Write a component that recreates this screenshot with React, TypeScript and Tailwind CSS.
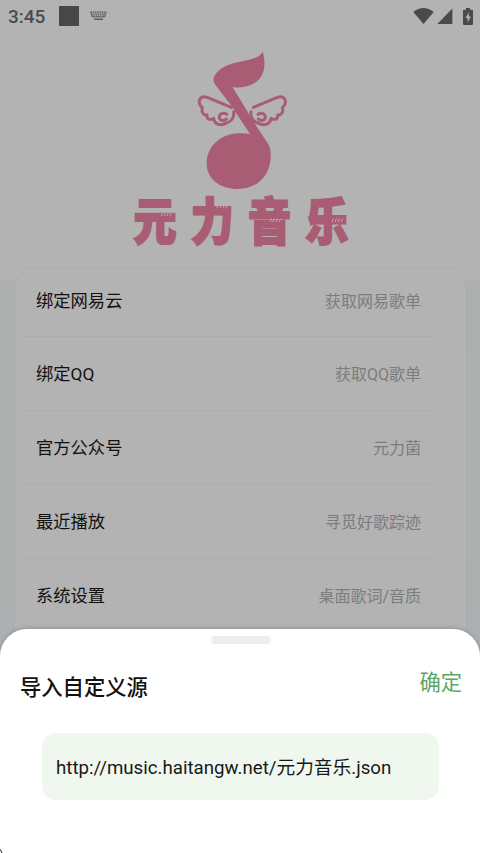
const rows = [
  { label: "绑定网易云", value: "获取网易歌单" },
  { label: "绑定QQ", value: "获取QQ歌单" },
  { label: "官方公众号", value: "元力菌" },
  { label: "最近播放", value: "寻觅好歌踪迹" },
  { label: "系统设置", value: "桌面歌词/音质" },
];

function KeyboardIcon() {
  return (
    <svg className="ml-[11px] h-[10px] w-[17px]" viewBox="0 0 17 10" fill="none" stroke="#555">
      <path d="M0.5 1.2H16.5M1 3.2H16M1.5 5.2H15.5" strokeWidth="1.3" strokeDasharray="1.5 0.7" />
      <path d="M0.5 1L2.5 6H14.5L16.5 1" strokeWidth="0.7" />
      <path d="M4 8.3H13" strokeWidth="1.3" />
    </svg>
  );
}

function StatusBar() {
  return (
    <div className="flex h-[34px] shrink-0 items-center pr-[7px] pb-[2px] pl-2 text-[#4a4a4a]">
      <span className="w-[51px] text-[19px] leading-none font-medium">3:45</span>
      <span className="size-5 bg-[#474747]" />
      <KeyboardIcon />
      <svg className="ml-auto h-4 w-[21px]" viewBox="0 0 21 16" fill="currentColor">
        <path d="M0.3 4Q10.5-4 20.7 4L10.5 16Z" />
      </svg>
      <svg className="ml-[3px] h-4 w-4" viewBox="0 0 16 16" fill="currentColor">
        <path d="M0.3 16L15.4 0.5V16Z" />
      </svg>
      <svg className="ml-[10px] h-[17px] w-[10px]" viewBox="0 0 10 17">
        <path d="M3 0H7V1.7H9Q10 1.7 10 2.7V16Q10 17 9 17H1Q0 17 0 16V2.7Q0 1.7 1 1.7H3Z" fill="currentColor" />
        <path d="M6 4.3L2.4 10H4.6V14.5L7.9 8.5H5.8Z" fill="#b3b3b3" />
      </svg>
    </div>
  );
}

function Wing() {
  return (
    <g fill="none" stroke="#a85d74" strokeWidth="9" strokeLinecap="round" strokeLinejoin="round">
      <path d="M124 187L52 157C36 151 26 161 28 174C29 181 34 185 37 188C33 200 39 211 51 210C49 223 59 226 71 220C73 237 88 242 103 237C121 232 134 219 131 200" />
      <path d="M110 208C100 201 88 206 88 216C88 227 103 230 109 222" />
    </g>
  );
}

function Logo() {
  return (
    <svg className="mt-[11px] ml-[190px] h-[145px] w-[105px] shrink-0" viewBox="0 0 315 435">
      <Wing />
      <g transform="translate(314 0) scale(-1 1)">
        <Wing />
      </g>
      <path
        d="M218 20C228 54 225 84 206 104C188 122 158 129 128 127L192 232L232 293C240 304 243 317 242 338C240 393 200 432 143 432C91 432 51 403 50 357C49 306 91 266 146 265C157 264 169 265 180 267L123 181L76 119C69 111 68 99 77 87C91 66 119 56 150 50C183 43 208 39 218 20Z"
        fill="#a85d74"
      />
    </svg>
  );
}

function Wordmark() {
  return (
    <div className="relative mt-[3px] ml-[132px] h-[56px] w-[220px] shrink-0">
      <div className="grid h-full origin-top scale-y-[1.17] grid-cols-[repeat(4,57.3px)] text-[43px] leading-[50px] font-black text-[#a85d74] [-webkit-text-stroke:1.8px_#a85d74]">
        {["元", "力", "音", "乐"].map((c) => (
          <span key={c} className="block w-[46px] text-center">{c}</span>
        ))}
      </div>
      <svg
        className="absolute inset-0 h-full w-full"
        viewBox="0 0 220 56"
        stroke="#c9a5ae"
        strokeWidth="1"
      >
        <path d="M29 23l1.5-3.5M32 23l1.5-3.5M35 23l1.5-3.5M38 23l1.5-3.5" />
        <path d="M85 15l1.5-3.5M88 15l1.5-3.5M91 15l1.5-3.5M94 15l1.5-3.5" />
        <path d="M138 29l1.5-3.5M141 29l1.5-3.5M144 29l1.5-3.5M147 29l1.5-3.5" />
        <path d="M200 29l1.5-3.5M203 29l1.5-3.5M206 29l1.5-3.5M209 29l1.5-3.5" />
      </svg>
    </div>
  );
}

export default function App() {
  return (
    <div
      className="relative flex h-[853px] w-[480px] flex-col overflow-hidden bg-[#b3b3b3]"
      style={{ fontFamily: 'Roboto, "Noto Sans CJK SC", sans-serif' }}
    >
      <header className="flex h-[280px] shrink-0 flex-col">
        <StatusBar />
        <Logo />
        <Wordmark />
      </header>
      <main className="flex-1 bg-gradient-to-b from-[#acb1af] to-[#adb0b2] to-60% px-[14px]">
        <section className="relative -mt-[13px] mr-[-1px] h-[600px] rounded-[21px] border border-[#acacac] bg-[#b3b3b3] pr-[34px] pl-[10px]">
          {rows.map((row, i) => (
            <div
              key={row.label}
              className={`flex items-center justify-between border-b border-[#acacac] pr-[11px] pl-[11px] ${i === 0 ? "h-[69px] pb-px" : "h-[74px] pt-[3px]"}`}
            >
              <span className="text-[17.3px] text-[#111]">{row.label}</span>
              <span className="text-[16px] text-[#7c7c7c]">{row.value}</span>
            </div>
          ))}
        </section>
      </main>

      <div className="absolute inset-x-0 bottom-0 flex h-[224px] flex-col rounded-t-[27px] bg-white shadow-[0_-1px_4px_rgba(0,0,0,0.18)]">
        <span className="mt-[7px] ml-[211px] h-2 w-[60px] shrink-0 rounded-full bg-[#eee]" />
        <div className="flex h-[89px] justify-between pr-[18px] pl-5">
          <h2 className="mt-[28px] text-[21.3px] leading-8 font-medium text-[#111]">导入自定义源</h2>
          <button className="mt-[23px] h-8 text-[21.3px] leading-8 text-[#5aa768]">确定</button>
        </div>
        <div className="ml-[42px] flex h-[67px] w-[397px] items-center rounded-[14px] bg-[#f0f7ef] pt-[3px] pl-[14px] text-[18.7px] text-[#171917]">
          http://music.haitangw.net/元力音乐.json
        </div>
        <svg className="mt-auto h-1 w-[3px]" viewBox="0 0 3 4">
          <path d="M0 0L2 4" stroke="#333" />
        </svg>
      </div>
    </div>
  );
}
